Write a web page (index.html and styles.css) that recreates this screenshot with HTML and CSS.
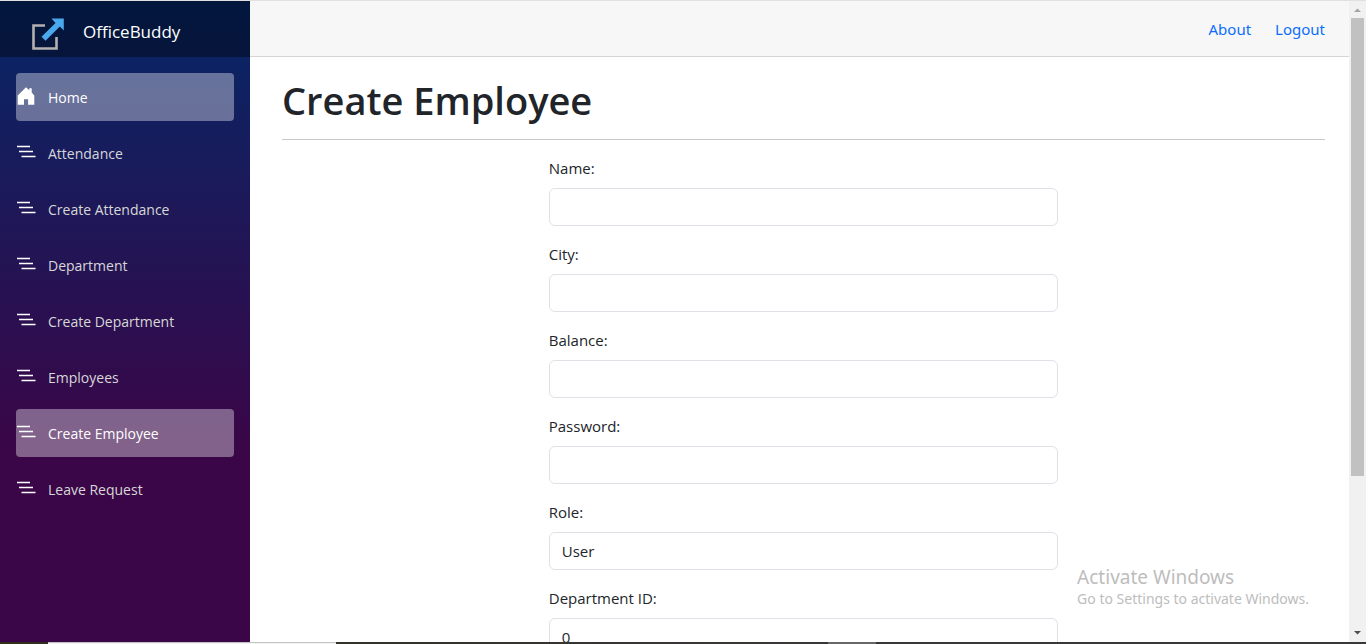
FILE: index.html
```html
<!DOCTYPE html>
<html lang="en">
<head>
<meta charset="utf-8">
<title>Create Employee - OfficeBuddy</title>
<link rel="stylesheet" href="styles.css">
</head>
<body>
<svg class="sprite" aria-hidden="true">
  <symbol id="lines" viewBox="0 0 20 16">
    <path d="M1 2.5h13M3 7.5h14M5.500 12.500h14" stroke="#fff" stroke-width="1.300"/>
  </symbol>
</svg>
<div class="app">
  <aside class="sidebar">
    <div class="brand">
      <svg class="brand-icon" viewBox="0 0 34 34" aria-hidden="true">
        <path d="M14 8.500H2.500v23h23V20" fill="none" stroke="#b3b1b0" stroke-width="2.600"/>
        <path d="M20.500 1.500h12.300v12l-4-4L14.500 23.700l-4-4L24.500 6z" fill="#4aa8ec"/>
      </svg>
      <a class="brand-name" href="#">OfficeBuddy</a>
    </div>
    <nav class="menu">
      <a class="item active" href="#"><svg class="icon" viewBox="0 0 20 20" aria-hidden="true"><path d="M10 1.300l3.300 3V2.300h2.400v4.300l2.600 3v9.100h-6.200v-5.500H8v5.500H1.700V9.600z" fill="#fff"/></svg>Home</a>
      <a class="item" href="#"><svg class="icon lines"><use href="#lines"/></svg>Attendance</a>
      <a class="item" href="#"><svg class="icon lines"><use href="#lines"/></svg>Create Attendance</a>
      <a class="item" href="#"><svg class="icon lines"><use href="#lines"/></svg>Department</a>
      <a class="item" href="#"><svg class="icon lines"><use href="#lines"/></svg>Create Department</a>
      <a class="item" href="#"><svg class="icon lines"><use href="#lines"/></svg>Employees</a>
      <a class="item active" href="#"><svg class="icon lines"><use href="#lines"/></svg>Create Employee</a>
      <a class="item" href="#"><svg class="icon lines"><use href="#lines"/></svg>Leave Request</a>
    </nav>
  </aside>
  <main class="main">
    <header class="topbar">
      <a href="#">About</a>
      <a href="#">Logout</a>
    </header>
    <article class="content">
      <h1>Create Employee</h1>
      <hr>
      <form class="form">
        <div class="field"><label for="name">Name:</label><input id="name" type="text"></div>
        <div class="field"><label for="city">City:</label><input id="city" type="text"></div>
        <div class="field"><label for="balance">Balance:</label><input id="balance" type="text"></div>
        <div class="field"><label for="password">Password:</label><input id="password" type="password"></div>
        <div class="field"><label for="role">Role:</label><select id="role"><option>User</option></select></div>
        <div class="field"><label for="department">Department ID:</label><input id="department" type="text" value="0"></div>
      </form>
    </article>
    <div class="watermark">
      <p class="watermark-title">Activate Windows</p>
      <p class="watermark-text">Go to Settings to activate Windows.</p>
    </div>
  </main>
  <div class="scrollbar" aria-hidden="true">
    <svg class="arrow" viewBox="0 0 17 17"><path d="M5 11h7L8.500 7.500z" fill="#a3a3a3"/></svg>
    <div class="track"><div class="thumb"></div></div>
    <svg class="arrow" viewBox="0 0 17 17"><path d="M5 6h7L8.500 9.500z" fill="#505050"/></svg>
  </div>
</div>
<div class="taskbar" aria-hidden="true"><span class="search"></span><span class="running"></span></div>
</body>
</html>
```

FILE: styles.css
```css
* {
  box-sizing: border-box;
}

body {
  margin: 0;
  height: 100vh;
  display: flex;
  flex-direction: column;
  overflow: hidden;
  border-top: 1px solid #e0e0e0;
  background: #fff;
  color: #212529;
  font: 15px/24px "Segoe UI", "Open Sans", "Noto Sans", sans-serif;
}

a {
  text-decoration: none;
}

.sprite {
  display: none;
}

.app {
  flex: 1;
  min-height: 0;
  display: flex;
}

.sidebar {
  flex: 0 0 250px;
  background: linear-gradient(180deg, #052767 0%, #3a0647 70%);
}

.brand {
  height: 56px;
  padding: 10px 0 0 31px;
  display: flex;
  align-items: center;
  gap: 18px;
  background: rgba(0, 0, 0, 0.4);
}

.brand-icon {
  width: 34px;
  height: 34px;
}

.brand-name {
  padding-bottom: 4px;
  color: #fff;
  font-size: 17px;
}

.menu {
  display: flex;
  flex-direction: column;
  gap: 8px;
  padding: 16px;
}

.item {
  display: flex;
  align-items: center;
  gap: 12px;
  height: 48px;
  padding-top: 2px;
  border-radius: 4px;
  color: #d7d7d7;
  font-size: 14px;
}

.item.active {
  background: rgba(255, 255, 255, 0.37);
  color: #fff;
}

.icon {
  width: 20px;
  height: 20px;
  margin-bottom: 4px;
}

.icon.lines {
  height: 16px;
}

.main {
  position: relative;
  flex: 1;
  min-width: 0;
  overflow: hidden;
}

.topbar {
  display: flex;
  justify-content: flex-end;
  align-items: center;
  gap: 24px;
  height: 56px;
  padding: 0 24px 0 32px;
  border-bottom: 1px solid #d6d5d5;
  background: #f7f7f7;
}

.topbar a {
  color: #0d6efd;
  font-family: "Segoe UI", "Noto Sans", sans-serif;
}

.content {
  padding: 20px 24px 0 32px;
}

h1 {
  margin: 0;
  font-size: 38px;
  line-height: 46px;
  font-weight: 600;
}

hr {
  margin: 16px 0;
  border: 0;
  border-top: 1px solid #c8c9ca;
}

.form {
  width: calc(50% - 12px);
  margin: 0 auto;
}

.field {
  display: flex;
  flex-direction: column;
  gap: 8px;
  margin-bottom: 16px;
}

.field input,
.field select {
  width: 100%;
  height: 38px;
  padding: 6px 12px;
  border: 1px solid #dee2e6;
  border-radius: 6px;
  background: #fff;
  color: #212529;
  font: inherit;
  appearance: none;
}

.watermark {
  position: absolute;
  right: 40px;
  bottom: 33px;
  color: #bdbdbd;
  font-family: "Segoe UI", "Noto Sans", sans-serif;
}

.watermark p {
  margin: 0;
}

.watermark-title {
  font-size: 19px;
}

.watermark-text {
  font-size: 14px;
  line-height: 20px;
}

.scrollbar {
  flex: 0 0 17px;
  display: flex;
  flex-direction: column;
  background: #f1f1f1;
}

.arrow {
  width: 17px;
  height: 17px;
}

.track {
  flex: 1;
  padding: 0 2px;
}

.thumb {
  width: 13px;
  height: 75.500%;
  background: #c1c1c1;
}

.taskbar {
  display: flex;
  height: 2px;
  padding-left: 48px;
  background: linear-gradient(90deg, #302c1e, #393838 60%);
}

.search {
  width: 288px;
  border-top: 1px solid #c3c3c3;
  background: #f3f3f3;
}

.running {
  width: 48px;
  margin-left: 492px;
  background: #686868;
}
```
